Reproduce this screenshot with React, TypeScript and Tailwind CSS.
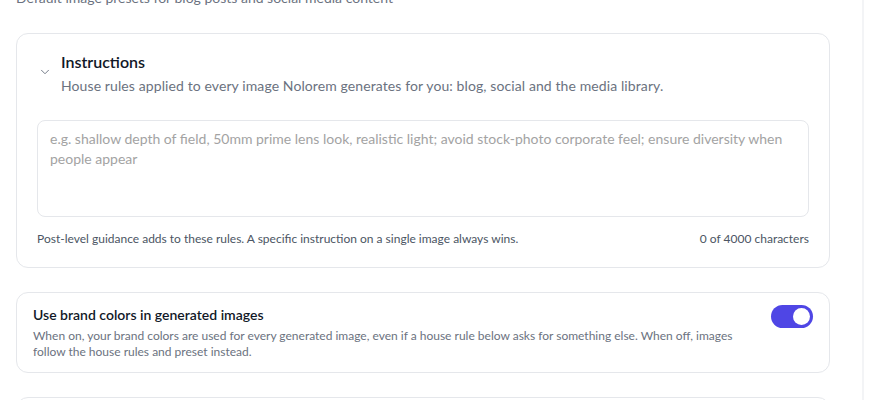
import { useState } from 'react';

function Chevron() {
  return (
    <svg width="14" height="14" viewBox="0 0 24 24" fill="none" stroke="#6b7280" strokeWidth="1.6" strokeLinecap="round" strokeLinejoin="round">
      <path d="m6 9 6 6 6-6" />
    </svg>
  );
}

export default function App() {
  const [text, setText] = useState('');
  const [brand, setBrand] = useState(true);

  return (
    <div className="h-[400px] overflow-hidden bg-white font-['Lato',sans-serif] flex flex-col">
      <div className="w-[864px] h-[412px] -mt-3 border-r-2 border-[#f3f4f6] pl-4 pr-8 flex flex-col">
        <p className="text-sm leading-5 text-[#6b7280]">
          Default image presets for blog posts and social media content
        </p>

        <div className="mt-[25px] rounded-xl border border-[#e5e7eb] px-5 pt-[18px] pb-5">
          <div className="flex items-center gap-2">
            <div className="w-4 flex justify-center pb-1">
              <Chevron />
            </div>
            <div>
              <h2 className="text-base leading-5 font-semibold text-[#111827]">Instructions</h2>
              <p className="mt-1 text-sm leading-5 text-[#6b7280] tracking-[0.1px]">
                House rules applied to every image Nolorem generates for you: blog, social and the media library.
              </p>
            </div>
          </div>

          <textarea
            value={text}
            onChange={(e) => setText(e.target.value)}
            maxLength={4000}
            className="mt-6 block w-full h-[97px] resize-none rounded-lg border border-[#e5e7eb] px-3 py-2 text-sm leading-5 text-[#111827] placeholder:text-[#a3a3a3] outline-none"
            placeholder="e.g. shallow depth of field, 50mm prime lens look, realistic light; avoid stock-photo corporate feel; ensure diversity when people appear"
          />

          <div className="mt-[14px] flex justify-between text-xs leading-4 text-[#4b5563]">
            <span>Post-level guidance adds to these rules. A specific instruction on a single image always wins.</span>
            <span>{text.length} of 4000 characters</span>
          </div>
        </div>

        <div className="mt-6 rounded-xl border border-[#e5e7eb] px-4 pt-3 pb-3">
          <div className="flex items-start gap-6">
            <div className="flex-1">
              <h3 className="text-sm leading-5 font-semibold text-[#111827]">Use brand colors in generated images</h3>
              <p className="mt-[3px] text-xs leading-4 text-[#6b7280]">
                When on, your brand colors are used for every generated image, even if a house rule below asks for something else. When off, images follow the house rules and preset instead.
              </p>
            </div>
            <button
              onClick={() => setBrand(!brand)}
              className={`shrink-0 w-[42px] h-[23px] rounded-full flex items-center px-[3px] ${brand ? 'bg-[#4f46e5] justify-end' : 'bg-[#d1d5db] justify-start'}`}
            >
              <span className="w-[17px] h-[17px] rounded-full bg-white" />
            </button>
          </div>
        </div>

        <div className="mt-6 h-20 shrink-0 rounded-xl border border-[#e5e7eb]" />
      </div>
    </div>
  );
}
